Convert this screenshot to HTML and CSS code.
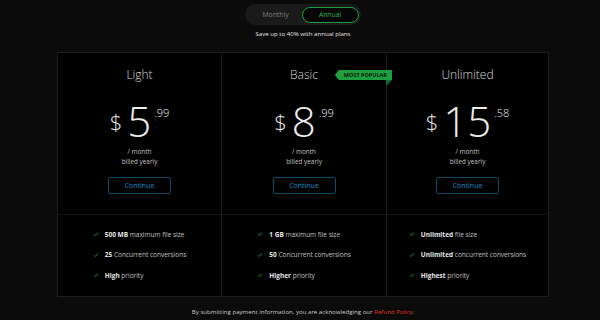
FILE: index.html
```html
<!DOCTYPE html>
<html lang="en">
<head>
  <meta charset="UTF-8">
  <meta name="viewport" content="width=device-width, initial-scale=1.0">
  <title>Pricing</title>
  <link rel="stylesheet" href="styles.css">
</head>
<body>

  <div class="billing-toggle">
    <button class="toggle-option">Monthly</button>
    <button class="toggle-option active">Annual</button>
  </div>
  <p class="tagline">Save up to 40% with annual plans</p>

  <div class="plans">
    <div class="plan">
      <div class="plan-head">
        <h2 class="plan-name">Light</h2>
        <div class="price">
          <span class="currency">$</span>
          <span class="amount">5</span>
          <span class="cents">.99</span>
        </div>
        <p class="period">/ month</p>
        <p class="period">billed yearly</p>
        <button class="continue-btn">Continue</button>
      </div>
      <div class="plan-features">
        <ul>
          <li><svg viewBox="0 0 10 10"><polyline points="1.5,5.2 4,7.5 8.5,2.5"/></svg><span><b>500 MB</b> maximum file size</span></li>
          <li><svg viewBox="0 0 10 10"><polyline points="1.5,5.2 4,7.5 8.5,2.5"/></svg><span><b>25</b> Concurrent conversions</span></li>
          <li><svg viewBox="0 0 10 10"><polyline points="1.5,5.2 4,7.5 8.5,2.5"/></svg><span><b>High</b> priority</span></li>
        </ul>
      </div>
    </div>

    <div class="plan">
      <span class="badge">Most popular</span>
      <div class="plan-head">
        <h2 class="plan-name">Basic</h2>
        <div class="price">
          <span class="currency">$</span>
          <span class="amount">8</span>
          <span class="cents">.99</span>
        </div>
        <p class="period">/ month</p>
        <p class="period">billed yearly</p>
        <button class="continue-btn">Continue</button>
      </div>
      <div class="plan-features">
        <ul>
          <li><svg viewBox="0 0 10 10"><polyline points="1.5,5.2 4,7.5 8.5,2.5"/></svg><span><b>1 GB</b> maximum file size</span></li>
          <li><svg viewBox="0 0 10 10"><polyline points="1.5,5.2 4,7.5 8.5,2.5"/></svg><span><b>50</b> Concurrent conversions</span></li>
          <li><svg viewBox="0 0 10 10"><polyline points="1.5,5.2 4,7.5 8.5,2.5"/></svg><span><b>Higher</b> priority</span></li>
        </ul>
      </div>
    </div>

    <div class="plan">
      <div class="plan-head">
        <h2 class="plan-name">Unlimited</h2>
        <div class="price">
          <span class="currency">$</span>
          <span class="amount">15</span>
          <span class="cents">.58</span>
        </div>
        <p class="period">/ month</p>
        <p class="period">billed yearly</p>
        <button class="continue-btn">Continue</button>
      </div>
      <div class="plan-features">
        <ul>
          <li><svg viewBox="0 0 10 10"><polyline points="1.5,5.2 4,7.5 8.5,2.5"/></svg><span><b>Unlimited</b> file size</span></li>
          <li><svg viewBox="0 0 10 10"><polyline points="1.5,5.2 4,7.5 8.5,2.5"/></svg><span><b>Unlimited</b> concurrent conversions</span></li>
          <li><svg viewBox="0 0 10 10"><polyline points="1.5,5.2 4,7.5 8.5,2.5"/></svg><span><b>Highest</b> priority</span></li>
        </ul>
      </div>
    </div>
  </div>

  <p class="legal">By submitting payment information, you are acknowledging our <a href="#">Refund Policy</a>.</p>

</body>
</html>
```

FILE: styles.css
```css
:root {
  --fundo: #0b0b0b;
  --cartao: #000000;
  --borda: #1c1c1c;
  --texto: #d8d8d8;
  --texto-suave: #c0c0c0;
  --verde: #1e9e3e;
  --verde-texto: #2fb552;
  --azul: #1b8cc0;
  --azul-borda: #0d4b68;
  --vermelho: #e0302c;
}

* {
  box-sizing: border-box;
}

body {
  margin: 0;
  padding: 4px 0 0 6px; /* page content sits slightly right of center */
  background-color: var(--fundo);
  color: var(--texto);
  font-family: 'Open Sans', 'DejaVu Sans', sans-serif;
  display: flex;
  flex-direction: column;
  align-items: center;
}

/* Monthly / Annual switch */
.billing-toggle {
  display: flex;
  align-items: center;
  background-color: #1a1a1a;
  border-radius: 12px;
  padding: 2px 2px 2px 8px;
  height: 21px;
}

.toggle-option {
  font-family: inherit;
  font-size: 6.8px;
  background: none;
  border: 1px solid transparent;
  color: #7c7c7c;
  height: 16px;
  padding: 0 8px;
  border-radius: 10px;
  cursor: pointer;
}

.toggle-option.active {
  background-color: #050505;
  border-color: var(--verde);
  color: var(--verde-texto);
  width: 57px;
  margin-left: 4px;
}

.tagline {
  margin: 4px 0 0;
  font-size: 6.1px;
  line-height: 10px;
  color: #e6e6e6;
}

/* Plans grid */
.plans {
  margin-top: 13px;
  width: 492px;
  display: grid;
  grid-template-columns: 164px 165px 1fr;
  background-color: var(--cartao);
  border: 1px solid var(--borda);
}

.plan {
  position: relative;
  display: flex;
  flex-direction: column;
  border-right: 1px solid var(--borda);
}

.plan:last-child {
  border-right: none;
}

.plan-head {
  height: 161px;
  flex: none;
  display: flex;
  flex-direction: column;
  align-items: center;
  padding-top: 15px;
}

.plan-name {
  margin: 0;
  font-size: 12px;
  line-height: 14px;
  font-weight: 300;
  color: var(--texto);
}

.price {
  margin-top: 18px;
  display: flex;
  align-items: center;
  height: 42px;
  color: #ececec;
  font-weight: 300;
}

.currency {
  font-size: 22px;
  line-height: 22px;
  margin-right: 5px;
}

.amount {
  font-size: 42px;
  line-height: 42px;
}

.cents {
  align-self: flex-start;
  font-size: 11px;
  line-height: 11px;
  margin: 7px 0 0 3px;
}

.period {
  margin: 0;
  font-size: 6.4px;
  line-height: 10px;
  text-align: center;
  color: var(--texto-suave);
}

.price + .period {
  margin-top: 5px;
}

.continue-btn {
  margin-top: 10px;
  width: 63px;
  height: 17px;
  font-family: inherit;
  font-size: 7px;
  color: var(--azul);
  background: none;
  border: 1px solid var(--azul-borda);
  border-radius: 2px;
  cursor: pointer;
}

/* Green ribbon on the middle plan */
.badge {
  position: absolute;
  top: 17px;
  right: -6px;
  height: 10px;
  padding: 0 5px 0 9px;
  background-color: var(--verde);
  color: #061a0a;
  font-size: 5.5px;
  line-height: 10px;
  font-weight: 700;
  text-transform: uppercase;
  clip-path: polygon(4px 0, 100% 0, 100% 100%, 4px 100%, 0 50%);
}

.plan:nth-child(2)::after {
  content: '';
  position: absolute;
  top: 27px;
  right: -6px;
  width: 0;
  height: 0;
  border-top: 6px solid #0f6a26;
  border-right: 6px solid transparent;
}

.plan-features {
  flex: none;
  height: 82px;
  border-top: 1px solid #161616;
  display: flex;
  justify-content: center;
  padding-top: 13px;
}

.plan-features ul {
  list-style: none;
  margin: 0;
  padding: 0;
}

.plan-features li {
  display: flex;
  align-items: center;
  gap: 6px;
  height: 12px;
  margin-bottom: 8.5px;
  font-size: 6.5px;
  color: var(--texto-suave);
}

.plan-features b {
  font-weight: 700;
  color: #e6e6e6;
}

.plan-features svg {
  width: 6px;
  height: 6px;
  fill: none;
  stroke: var(--verde);
  stroke-width: 1.4;
}

.legal {
  margin: 10px 0 0;
  font-size: 6.1px;
  line-height: 10px;
  color: #c8c8c8;
}

.legal a {
  color: var(--vermelho);
  text-decoration: none;
}
```
